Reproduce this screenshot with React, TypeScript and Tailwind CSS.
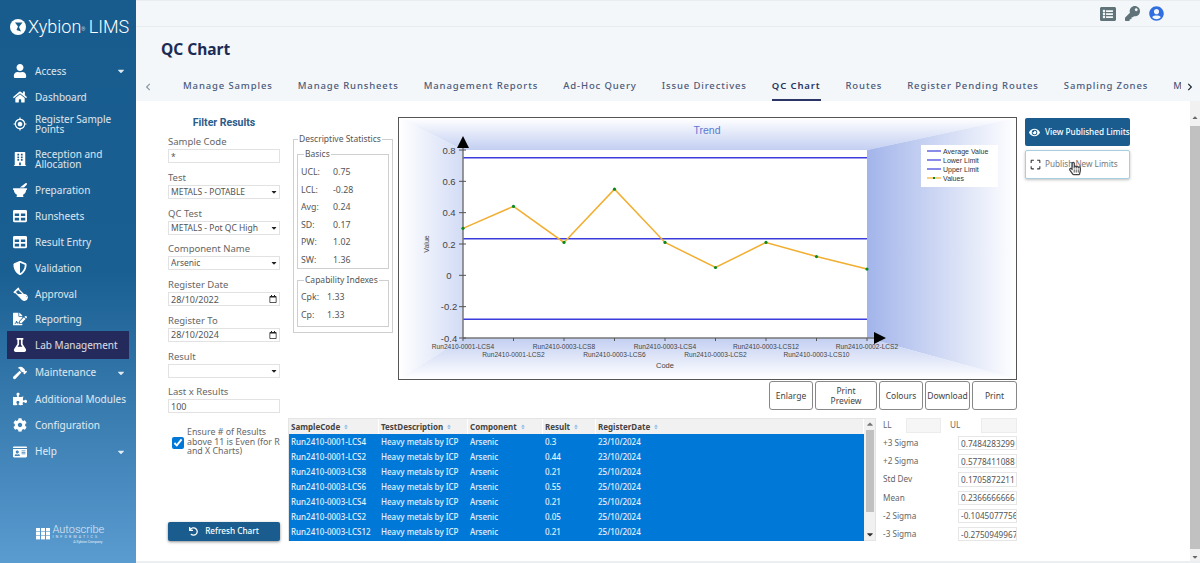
import type { ReactNode } from 'react';
import {
  FaBuilding,
  FaCaretDown,
  FaCheckCircle,
  FaChevronLeft,
  FaChevronRight,
  FaCog,
  FaEye,
  FaFileSignature,
  FaFlask,
  FaHammer,
  FaHome,
  FaIdCard,
  FaKey,
  FaListAlt,
  FaMortarPestle,
  FaPuzzlePiece,
  FaRegCalendar,
  FaRegHandPointer,
  FaShieldAlt,
  FaSort,
  FaTable,
  FaUndo,
  FaUser,
  FaUserCircle,
  FaVial,
} from 'react-icons/fa';
import { MdCropFree, MdGpsFixed } from 'react-icons/md';

const uiFont = 'font-["Noto_Sans",sans-serif]';

const navItems = [
  { label: 'Access', icon: <FaUser />, height: 'h-[26px]', caret: true },
  { label: 'Dashboard', icon: <FaHome />, height: 'h-[26px]' },
  { label: 'Register Sample Points', icon: <MdGpsFixed />, height: 'h-[28px]' },
  { label: 'Reception and Allocation', icon: <FaBuilding />, height: 'h-[42px]' },
  { label: 'Preparation', icon: <FaMortarPestle />, height: 'h-[20px]' },
  { label: 'Runsheets', icon: <FaTable />, height: 'h-[32px]' },
  { label: 'Result Entry', icon: <FaTable />, height: 'h-[20px]' },
  { label: 'Validation', icon: <FaShieldAlt />, height: 'h-[32px]' },
  { label: 'Approval', icon: <ApprovalIcon />, height: 'h-[20px]' },
  { label: 'Reporting', icon: <FaFileSignature />, height: 'h-[27px] pt-[3px]' },
  { label: 'Lab Management', icon: <FaFlask />, height: 'h-[28px]', active: true },
  { label: 'Maintenance', icon: <FaHammer />, height: 'h-[27px]', caret: true },
  { label: 'Additional Modules', icon: <FaPuzzlePiece />, height: 'h-[26px]', nowrap: true },
  { label: 'Configuration', icon: <FaCog />, height: 'h-[26px]' },
  { label: 'Help', icon: <FaIdCard />, height: 'h-[27px]', caret: true },
];

const tabs = [
  'Manage Samples',
  'Manage Runsheets',
  'Management Reports',
  'Ad-Hoc Query',
  'Issue Directives',
  'QC Chart',
  'Routes',
  'Register Pending Routes',
  'Sampling Zones',
  'Maintain Zones',
];

const rows = [
  ['Run2410-0001-LCS4', '0.3', '23/10/2024'],
  ['Run2410-0001-LCS2', '0.44', '23/10/2024'],
  ['Run2410-0003-LCS8', '0.21', '25/10/2024'],
  ['Run2410-0003-LCS6', '0.55', '25/10/2024'],
  ['Run2410-0003-LCS4', '0.21', '25/10/2024'],
  ['Run2410-0003-LCS2', '0.05', '25/10/2024'],
  ['Run2410-0003-LCS12', '0.21', '25/10/2024'],
];

const sigmas = [
  ['+3 Sigma', '0.7484283299'],
  ['+2 Sigma', '0.5778411088'],
  ['Std Dev', '0.1705872211'],
  ['Mean', '0.2366666666'],
  ['-2 Sigma', '-0.1045077756'],
  ['-3 Sigma', '-0.2750949967'],
];

const columnGrid = 'grid grid-cols-[90px_89px_75px_53px_1fr]';

function ApprovalIcon() {
  return (
    <span className="relative block h-[14px] w-[14px]">
      <FaVial className="h-[14px] w-[14px] -scale-x-100" />
      <FaCheckCircle className="absolute -right-[1px] bottom-0 h-[7px] w-[7px]" />
    </span>
  );
}

function Sidebar() {
  return (
    <aside className="flex h-full w-[136px] shrink-0 flex-col bg-[linear-gradient(180deg,#185c8e_0%,#1a5f92_48%,#5a9bd0_100%)] text-white">
      <div className="flex h-[58px] items-start pl-[10px] pt-[16px]">
        <svg viewBox="0 0 16 16" className="mr-[2px] mt-[3px] h-[16px] w-[16px]">
          <circle cx="8" cy="8" r="8" fill="#fff" />
          <path d="M5 3.5h7.5L9 8l2 4.5-4.5-1.5L8 7.5z" fill="#185c8e" />
        </svg>
        <span className='font-["Roboto",sans-serif] text-[18px] font-light leading-[22px] whitespace-nowrap'>
          Xybion<sup className="text-[5px]">®</sup> <span className="-ml-[1px]">LIMS</span>
        </span>
      </div>
      <nav className={`flex flex-col ${uiFont} text-[10px] leading-[10.5px]`}>
        {navItems.map((item) => (
          <div
            key={item.label}
            className={`flex items-center ${item.height} ${item.active ? 'mx-[7px] bg-[#242a5c] pl-[6px]' : 'pl-[13px]'}`}
          >
            <span className="flex w-[14px] shrink-0 justify-center text-[14px]">{item.icon}</span>
            <span className={`ml-[8px] w-[88px] shrink-0 text-white/85 ${item.nowrap ? 'whitespace-nowrap' : ''}`}>{item.label}</span>
            {item.caret && <FaCaretDown className="-ml-[7px] text-[10px] text-white/85" />}
          </div>
        ))}
      </nav>
      <div className="mt-auto flex items-center justify-center pb-[19px] pl-[2px]">
        <svg viewBox="0 0 14 12" className="h-[12px] w-[14px] shrink-0">
          {[0, 5, 10].map((x) =>
            [0, 4, 8].map((y) => <rect key={`${x}-${y}`} x={x} y={y} width="4" height="3.4" fill="#fff" />),
          )}
        </svg>
        <div className='ml-[3px] flex w-[50px] flex-col font-["Roboto",sans-serif] text-white/80'>
          <span className="text-[11px] font-light leading-[11px]">Autoscribe</span>
          <span className="text-[3.5px] leading-[5px] tracking-[2.2px] whitespace-nowrap">INFORMATICS</span>
          <span className="self-end text-[3.5px] leading-[4px]">A Xybion Company</span>
        </div>
      </div>
    </aside>
  );
}

function TopArea() {
  return (
    <header className="shrink-0 bg-[#f3f7f9]">
      <div className="flex h-[27px] items-center justify-end gap-[9px] border-t border-b border-t-[#e9edef] border-b-[#e8ecee] pr-[36px] text-[15px] text-[#5f7378]">
        <FaListAlt className="text-[16px]" />
        <FaKey />
        <FaUserCircle className="text-[#2f6fdf]" />
      </div>
      <h1 className={`pl-[25px] pt-[12px] ${uiFont} text-[15.5px] font-bold leading-[20px] text-[#1c2b55]`}>QC Chart</h1>
      <div className="mt-[14px] flex h-[28px] items-stretch">
        <div className="flex w-[47px] items-center pl-[8px] text-[8px] text-[#8a98a6]">
          <FaChevronLeft />
        </div>
        <div className={`flex flex-1 gap-[25px] overflow-hidden ${uiFont} text-[9.5px] font-medium tracking-[0.87px] text-[#4c5a7c]`}>
          {tabs.map((tab) => (
            <span
              key={tab}
              className={`flex shrink-0 items-center whitespace-nowrap border-b-2 ${tab === 'QC Chart' ? 'border-[#2b3566] font-semibold text-[#28345f]' : 'border-transparent'}`}
            >
              {tab}
            </span>
          ))}
        </div>
        <div className="flex w-[19px] items-center pl-[5px] text-[8px] text-[#1f2937]">
          <FaChevronRight />
        </div>
      </div>
    </header>
  );
}

const fieldClass =
  'block h-[14px] w-full rounded-none border border-[#e2e2e2] bg-white px-[2px] text-[8.5px] leading-[12px] text-[#555] outline-none';

function Field({ label, children }: { label: string; children: ReactNode }) {
  return (
    <div className="flex h-[28px] flex-col">
      <label className="h-[14px] text-[9.5px] leading-[13px] text-[#666]">{label}</label>
      {children}
    </div>
  );
}

function SelectField({ label, value }: { label: string; value: string }) {
  return (
    <Field label={label}>
      <div className="relative">
        <select className={`${fieldClass} appearance-none`} defaultValue={value}>
          <option value={value}>{value}</option>
        </select>
        <FaCaretDown className="absolute right-[2px] top-[3px] text-[8px] text-[#222]" />
      </div>
    </Field>
  );
}

function DateField({ label, value }: { label: string; value: string }) {
  return (
    <Field label={label}>
      <div className="relative">
        <input className={`${fieldClass} text-[9px]`} defaultValue={value} />
        <FaRegCalendar className="absolute right-[3px] top-[3px] text-[8px] text-[#222]" />
      </div>
    </Field>
  );
}

function FilterPanel() {
  return (
    <div className={`flex w-[112px] shrink-0 flex-col pb-[20px] pt-[15px] ${uiFont}`}>
      <h2 className='mb-[6px] text-center font-["Roboto",sans-serif] text-[10.5px] font-bold leading-[13px] text-[#2a5b8b]'>Filter Results</h2>
      <div className="flex flex-col gap-[7.75px]">
        <Field label="Sample Code">
          <input className={fieldClass} defaultValue="*" />
        </Field>
        <SelectField label="Test" value="METALS - POTABLE" />
        <SelectField label="QC Test" value="METALS - Pot QC High" />
        <SelectField label="Component Name" value="Arsenic" />
        <DateField label="Register Date" value="28/10/2022" />
        <DateField label="Register To" value="28/10/2024" />
        <SelectField label="Result" value="" />
        <Field label="Last x Results">
          <input className={`${fieldClass} text-[9px]`} defaultValue="100" />
        </Field>
      </div>
      <label className="mt-[15px] flex items-center pl-[4px]">
        <input type="checkbox" defaultChecked className="m-0 h-[12px] w-[12px] shrink-0 accent-[#0078d7]" />
        <span className="ml-[3px] text-[8.8px] leading-[9.5px] text-[#666]">
          Ensure # of Results above 11 is Even (for R and X Charts)
        </span>
      </label>
      <button className="mt-auto flex h-[19px] items-center justify-center rounded-[2px] bg-[#1a5c8e] text-[8.2px] font-medium text-white shadow-[0_1px_3px_rgba(0,0,0,0.45)]">
        <FaUndo className="mr-[7px] text-[9px]" />
        Refresh Chart
      </button>
    </div>
  );
}

function StatRow({ label, value, valueClass }: { label: string; value: string; valueClass: string }) {
  return (
    <div className="flex h-[17.5px] items-center">
      <span className={valueClass}>{label}</span>
      <span>{value}</span>
    </div>
  );
}

function StatsPanel() {
  return (
    <fieldset className={`ml-[5px] mt-[16px] h-[200px] w-[100px] min-w-0 shrink-0 border border-[#cfcfcf] px-[3px] pt-[4px] ${uiFont} text-[8.8px] text-[#555]`}>
      <legend className="ml-[1px] px-[1px] text-[8.5px] leading-[12px] whitespace-nowrap text-[#555]">Descriptive Statistics</legend>
      <fieldset className="h-[120px] min-w-0 border border-[#cfcfcf] pl-[3px]">
        <legend className="ml-[3px] px-[1px] text-[8.5px] leading-[10px]">Basics</legend>
        <div className="pt-[5px]">
          <StatRow label="UCL:" value="0.75" valueClass="w-[32px]" />
          <StatRow label="LCL:" value="-0.28" valueClass="w-[32px]" />
          <StatRow label="Avg:" value="0.24" valueClass="w-[32px]" />
          <StatRow label="SD:" value="0.17" valueClass="w-[32px]" />
          <StatRow label="PW:" value="1.02" valueClass="w-[32px]" />
          <StatRow label="SW:" value="1.36" valueClass="w-[32px]" />
        </div>
      </fieldset>
      <fieldset className="mt-[6px] h-[52px] min-w-0 border border-[#cfcfcf] pl-[3px]">
        <legend className="ml-[3px] px-[1px] text-[8.5px] leading-[10px] whitespace-nowrap">Capability Indexes</legend>
        <div className="pt-[4px]">
          <StatRow label="Cpk:" value="1.33" valueClass="w-[26px]" />
          <StatRow label="Cp:" value="1.33" valueClass="w-[26px]" />
        </div>
      </fieldset>
    </fieldset>
  );
}

const yFor = (v: number) => 150 + (0.8 - v) * 156.67;
const chartValues = [0.3, 0.44, 0.21, 0.55, 0.21, 0.05, 0.21, 0.12, 0.04];
const chartPoints = chartValues.map((v, i) => ({ x: 463 + i * 50.5, y: yFor(v) }));
const xLabels = [
  'Run2410-0001-LCS4',
  'Run2410-0001-LCS2',
  'Run2410-0003-LCS8',
  'Run2410-0003-LCS6',
  'Run2410-0003-LCS4',
  'Run2410-0003-LCS2',
  'Run2410-0003-LCS12',
  'Run2410-0003-LCS10',
  'Run2410-0002-LCS2',
];

function TrendChart() {
  return (
    <div className="ml-[5px] h-[263px] w-[619px] shrink-0 border border-[#555] bg-white">
      <svg viewBox="399 118 617 261" className='block h-[261px] w-[617px] font-["Liberation_Sans",sans-serif]'>
        <defs>
          <linearGradient id="bgTop" gradientUnits="userSpaceOnUse" x1="0" y1="150" x2="0" y2="118">
            <stop offset="0" stopColor="#c3cff2" />
            <stop offset="1" stopColor="#fff" />
          </linearGradient>
          <linearGradient id="bgRight" gradientUnits="userSpaceOnUse" x1="867" y1="0" x2="1016" y2="0">
            <stop offset="0" stopColor="#a2b4ea" />
            <stop offset="1" stopColor="#fff" />
          </linearGradient>
          <linearGradient id="bgBottom" gradientUnits="userSpaceOnUse" x1="0" y1="338" x2="0" y2="379">
            <stop offset="0" stopColor="#c3cff2" />
            <stop offset="1" stopColor="#fff" />
          </linearGradient>
          <linearGradient id="bgLeft" gradientUnits="userSpaceOnUse" x1="463" y1="0" x2="399" y2="0">
            <stop offset="0" stopColor="#d3dcf6" />
            <stop offset="1" stopColor="#fff" />
          </linearGradient>
        </defs>
        <polygon points="399,118 1016,118 867,150 463,150" fill="url(#bgTop)" />
        <polygon points="1016,118 1016,379 867,338 867,150" fill="url(#bgRight)" />
        <polygon points="399,379 1016,379 867,338 463,338" fill="url(#bgBottom)" />
        <polygon points="399,118 463,150 463,338 399,379" fill="url(#bgLeft)" />
        <rect x="463" y="150" width="404" height="188" fill="#fff" />
        <text x="707" y="134" textAnchor="middle" fontSize="10.5" fill="#5b78d0">Trend</text>

        {[0.75, 0.24, -0.28].map((v) => (
          <line key={v} x1="463" x2="867" y1={yFor(v) + (v === 0.24 ? 1 : 0)} y2={yFor(v) + (v === 0.24 ? 1 : 0)} stroke="#3c3cdc" strokeWidth="1.5" />
        ))}
        <line x1="463" x2="463" y1="146" y2="338" stroke="#777" strokeWidth="1.5" />
        <line x1="463" x2="874" y1="338" y2="338" stroke="#777" strokeWidth="1.5" />
        {[0.8, 0.6, 0.4, 0.2, 0, -0.2, -0.4].map((v) => (
          <g key={v}>
            <line x1="459" x2="466" y1={yFor(v)} y2={yFor(v)} stroke="#555" />
            <text x="449" y={yFor(v) + 3.5} textAnchor="middle" fontSize="9.5" fill="#444">{v}</text>
          </g>
        ))}
        <polygon points="463,136 469,148 457,148" fill="#000" />
        <polygon points="874,332 886,338 874,344" fill="#000" />
        <text transform="translate(429 244) rotate(-90)" textAnchor="middle" fontSize="7" fill="#444">Value</text>

        {chartPoints.map((p, i) => (
          <g key={xLabels[i]}>
            <line x1={p.x} x2={p.x} y1="338" y2="341" stroke="#555" />
            <text x={p.x} y={i % 2 === 0 ? 349 : 357} textAnchor="middle" fontSize="6.6" fill="#444">{xLabels[i]}</text>
          </g>
        ))}
        <text x="665" y="368" textAnchor="middle" fontSize="7.5" fill="#444">Code</text>

        <polyline points={chartPoints.map((p) => `${p.x},${p.y}`).join(' ')} fill="none" stroke="#f2ae30" strokeWidth="1.5" />
        {chartPoints.map((p) => (
          <circle key={p.x} cx={p.x} cy={p.y} r="1.6" fill="#0a8a1e" />
        ))}

        <rect x="921" y="145" width="77" height="42" fill="#fff" />
        {['Average Value', 'Lower Limit', 'Upper Limit', 'Values'].map((name, i) => {
          const y = 151 + i * 9;
          return (
            <g key={name}>
              <line x1="927" x2="941" y1={y} y2={y} stroke={i === 3 ? '#f2ae30' : '#3c3cdc'} strokeWidth="1.2" />
              {i === 3 && <rect x="933" y={y - 1} width="2" height="2" fill="#0a8a1e" />}
              <text x="943" y={y + 2.5} fontSize="7" fill="#333">{name}</text>
            </g>
          );
        })}
      </svg>
    </div>
  );
}

function ChartButton({ width, children }: { width: string; children: ReactNode }) {
  return (
    <button className={`${width} flex h-[29px] items-center justify-center rounded-[3px] border border-[#888] bg-white text-center text-[8.5px] leading-[10px] text-[#444]`}>
      {children}
    </button>
  );
}

function ResultsTable() {
  return (
    <div className={`flex h-[123px] w-[588px] border border-[#e4e4e4] ${uiFont} text-[8px] leading-[15px]`}>
      <div className="w-[575px]">
        <div className={`${columnGrid} h-[15px] bg-[#f1f1f1] font-bold text-[#444]`}>
          {['SampleCode', 'TestDescription', 'Component', 'Result', 'RegisterDate'].map((name) => (
            <div key={name} className="flex items-center gap-[3px] border-r border-white pl-[2px] whitespace-nowrap">
              {name}
              <FaSort className="text-[6px] text-[#8fbfe8]" />
            </div>
          ))}
        </div>
        <div className="h-[107px] bg-[#0078d7] font-medium text-white/90">
          {rows.map((row) => (
            <div key={row[0]} className={`${columnGrid} h-[15px] pl-[2px]`}>
              <span>{row[0]}</span>
              <span>Heavy metals by ICP</span>
              <span>Arsenic</span>
              <span>{row[1]}</span>
              <span>{row[2]}</span>
            </div>
          ))}
        </div>
      </div>
      <div className="flex w-[11px] flex-col items-center bg-[#f1f1f1] text-[#777]">
        <FaCaretDown className="h-[11px] rotate-180 text-[6px]" />
        <div className="h-[82px] w-[8px] bg-[#c1c1c1]" />
        <FaCaretDown className="mt-auto h-[11px] text-[6px] text-[#333]" />
      </div>
    </div>
  );
}

function SigmaPanel() {
  return (
    <div className={`ml-[7px] flex w-[134px] flex-col ${uiFont} text-[8.2px] text-[#666]`}>
      <div className="flex h-[15px] items-center">
        <span className="w-[23px]">LL</span>
        <span className="h-[15px] w-[35px] border border-[#ececec] bg-[#f6f6f6]" />
        <span className="ml-[9px] w-[31px]">UL</span>
        <span className="h-[15px] w-[36px] border border-[#ececec] bg-[#f6f6f6]" />
      </div>
      <div className="mt-[3px] flex flex-col gap-[4px]">
        {sigmas.map(([label, value]) => (
          <div key={label} className="flex h-[14.2px] items-center justify-between">
            <span>{label}</span>
            <input readOnly value={value} className="h-[14.2px] w-[59px] border border-[#e6e6e6] pl-[2px] text-[8.2px] text-[#555] outline-none" />
          </div>
        ))}
      </div>
    </div>
  );
}

function ActionButtons() {
  return (
    <div className={`relative ml-[8px] mt-[1px] flex w-[105px] shrink-0 flex-col gap-[4px] ${uiFont} text-[8.2px]`}>
      <button className="flex h-[28px] items-center rounded-[2px] bg-[#1a5c8e] pl-[4px] font-medium whitespace-nowrap text-white">
        <FaEye className="mr-[5px] shrink-0 text-[11px]" />
        View Published Limits
      </button>
      <button className="flex h-[29px] items-center rounded-[2px] border border-[#a8cfe0] bg-white pl-[3px] whitespace-nowrap text-[#777] shadow-[0_1px_3px_rgba(0,0,0,0.25)]">
        <MdCropFree className="mr-[3px] shrink-0 text-[13px] text-[#333]" />
        Publish New Limits
      </button>
      <FaRegHandPointer className="absolute left-[44px] top-[43px] h-[15px] w-[12px] text-[#444]" />
    </div>
  );
}

export default function App() {
  return (
    <div className="flex h-[563px] w-[1200px] overflow-hidden bg-white">
      <Sidebar />
      <main className="flex min-w-0 flex-1 flex-col">
        <TopArea />
        <div className="flex min-h-0 flex-1 border-b-2 border-[#eceff1]">
          <div className="flex flex-1 pl-[32px]">
            <FilterPanel />
            <div className="ml-[8px] flex flex-col pt-[16px]">
              <div className="flex items-start">
                <StatsPanel />
                <TrendChart />
                <ActionButtons />
              </div>
              <div className={`mt-[1px] flex justify-end gap-[2px] pr-[113px] ${uiFont}`}>
                <ChartButton width="w-[44px]">Enlarge</ChartButton>
                <ChartButton width="w-[62px] px-[10px]">Print Preview</ChartButton>
                <ChartButton width="w-[44px]">Colours</ChartButton>
                <ChartButton width="w-[45px]">Download</ChartButton>
                <ChartButton width="w-[45px]">Print</ChartButton>
              </div>
              <div className="mt-[8px] flex">
                <ResultsTable />
                <SigmaPanel />
              </div>
            </div>
          </div>
          <div className="flex w-[10px] shrink-0 flex-col items-center bg-[#f1f1f1] pt-[13px] text-[#666]">
            <FaCaretDown className="h-[8px] rotate-180 text-[6px]" />
            <div className="mt-[4px] h-[423px] w-full bg-[#c1c1c1]" />
            <FaCaretDown className="mt-auto h-[8px] text-[6px]" />
          </div>
        </div>
      </main>
    </div>
  );
}
